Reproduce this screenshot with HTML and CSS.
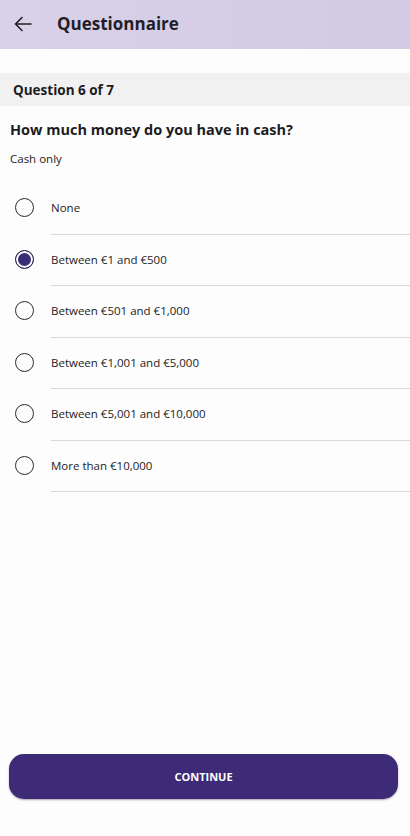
FILE: index.html
```html
<!DOCTYPE html>
<html lang="en">
<head>
    <meta charset="UTF-8">
    <meta name="viewport" content="width=device-width, initial-scale=1.0">
    <title>Questionnaire</title>
    <link rel="stylesheet" href="styles.css">
</head>
<body>
    <div class="app">
        <header class="topbar">
            <svg class="back" width="18" height="16" viewBox="0 0 18 16" fill="none" stroke="#1f1f24" stroke-width="1.6" stroke-linecap="round" stroke-linejoin="round">
                <path d="M17 8H1.5M8 1.5L1.5 8 8 14.5"/>
            </svg>
            <h1 class="title">Questionnaire</h1>
        </header>

        <div class="step">Question 6 of 7</div>

        <div class="question">
            <h2>How much money do you have in cash?</h2>
            <p class="hint">Cash only</p>
        </div>

        <ul class="options">
            <li class="option"><span class="radio"></span><span class="label">None</span></li>
            <li class="option"><span class="radio checked"></span><span class="label">Between €1 and €500</span></li>
            <li class="option"><span class="radio"></span><span class="label">Between €501 and €1,000</span></li>
            <li class="option"><span class="radio"></span><span class="label">Between €1,001 and €5,000</span></li>
            <li class="option"><span class="radio"></span><span class="label">Between €5,001 and €10,000</span></li>
            <li class="option"><span class="radio"></span><span class="label">More than €10,000</span></li>
        </ul>

        <div class="footer">
            <button class="continue">CONTINUE</button>
        </div>
    </div>
</body>
</html>
```

FILE: styles.css
```css
* {
    box-sizing: border-box;
}

body {
    margin: 0;
    font-family: "Open Sans", "Noto Sans", sans-serif;
    color: #1c1c22;
    background: #fdfdfe;
}

.app {
    height: 836px;
    display: flex;
    flex-direction: column;
}

.topbar {
    height: 49px;
    display: flex;
    align-items: center;
    padding-left: 14px;
    background: linear-gradient(to right, #d9d0ea, #d2c9e3);
}

.back {
    margin-top: -2px;
}

.title {
    margin: 0 0 2px 25px;
    font-size: 17px;
    font-weight: 700;
    color: #1f1f28;
}

.step {
    margin-top: 24px;
    height: 33px;
    display: flex;
    align-items: center;
    padding-left: 13px;
    font-size: 13.5px;
    font-weight: 700;
    background: #f1f1f2;
}

.question {
    padding: 13px 10px 0;
}

.question h2 {
    margin: 0;
    font-size: 14.5px;
    font-weight: 700;
    line-height: 22px;
}

.hint {
    margin: 10px 0 0;
    font-size: 11.5px;
    line-height: 16px;
}

.options {
    list-style: none;
    margin: 16px 0 0;
    padding: 0;
}

.option {
    height: 51.5px;
    display: flex;
    align-items: center;
    padding-left: 15px;
    position: relative;
}

.option::after {
    content: "";
    position: absolute;
    left: 51px;
    right: 0;
    bottom: 0;
    height: 1px;
    background: #d9d9dc;
}

.radio {
    width: 19px;
    height: 19px;
    border: 1.8px solid #2a2a30;
    border-radius: 50%;
    margin-bottom: 2px;
    flex-shrink: 0;
}

.radio.checked {
    border-color: #24204a;
    background: #3b2c7a;
    box-shadow: inset 0 0 0 2px #fff;
}

.label {
    margin-left: 17px;
    margin-bottom: 2px;
    font-size: 11.5px;
}

.footer {
    margin-top: auto;
    padding: 0 12px 37px 9px;
}

.continue {
    width: 100%;
    height: 45px;
    border: none;
    border-radius: 15px;
    background: #3d2b78;
    color: #fff;
    font-family: inherit;
    font-size: 11px;
    font-weight: 700;
    box-shadow: 0 1px 2px rgba(0, 0, 0, 0.35);
    cursor: pointer;
}
```
